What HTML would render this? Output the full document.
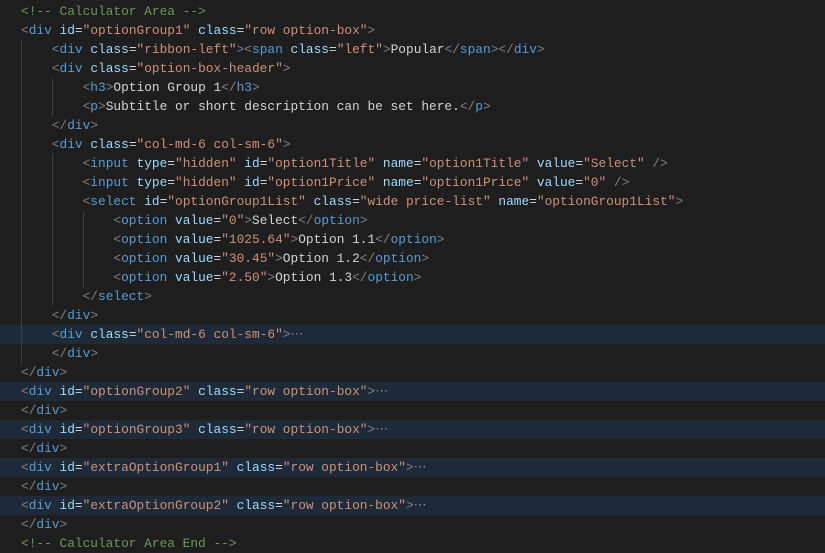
<!DOCTYPE html>
<html><head><meta charset="utf-8"><style>
html,body{margin:0;padding:0;background:#1e1e1e;width:825px;height:552px;overflow:hidden}
#c{position:absolute;left:21px;top:1.5px;font-family:"Liberation Mono",monospace;font-size:12.83px;line-height:19px;color:#d4d4d4;white-space:pre}
.l{height:19px}
.b{color:#808080}.t{color:#569cd6}.a{color:#9cdcfe}.s{color:#ce9178}.c{color:#6a9955}.e{color:#8b8b8b}
.hl{position:absolute;left:0;width:825px;height:19px;background:#1f2a38}
.g{position:absolute;width:1px;background:#404040}
</style></head><body>
<div class="hl" style="top:324.5px"></div>
<div class="hl" style="top:381.5px"></div>
<div class="hl" style="top:419.5px"></div>
<div class="hl" style="top:457.5px"></div>
<div class="hl" style="top:495.5px"></div>
<div class="g" style="left:21px;top:39.5px;height:323px"></div>
<div class="g" style="left:52px;top:77.5px;height:38px"></div>
<div class="g" style="left:52px;top:153.5px;height:152px"></div>
<div class="g" style="left:83px;top:210.5px;height:76px"></div>
<div id="c"><div class="l c">&lt;!-- Calculator Area --&gt;</div><div class="l"><span class="b">&lt;</span><span class="t">div</span> <span class="a">id</span>=<span class="s">"optionGroup1"</span> <span class="a">class</span>=<span class="s">"row option-box"</span><span class="b">&gt;</span></div><div class="l">    <span class="b">&lt;</span><span class="t">div</span> <span class="a">class</span>=<span class="s">"ribbon-left"</span><span class="b">&gt;&lt;</span><span class="t">span</span> <span class="a">class</span>=<span class="s">"left"</span><span class="b">&gt;</span>Popular<span class="b">&lt;/</span><span class="t">span</span><span class="b">&gt;&lt;/</span><span class="t">div</span><span class="b">&gt;</span></div><div class="l">    <span class="b">&lt;</span><span class="t">div</span> <span class="a">class</span>=<span class="s">"option-box-header"</span><span class="b">&gt;</span></div><div class="l">        <span class="b">&lt;</span><span class="t">h3</span><span class="b">&gt;</span>Option Group 1<span class="b">&lt;/</span><span class="t">h3</span><span class="b">&gt;</span></div><div class="l">        <span class="b">&lt;</span><span class="t">p</span><span class="b">&gt;</span>Subtitle or short description can be set here.<span class="b">&lt;/</span><span class="t">p</span><span class="b">&gt;</span></div><div class="l">    <span class="b">&lt;/</span><span class="t">div</span><span class="b">&gt;</span></div><div class="l">    <span class="b">&lt;</span><span class="t">div</span> <span class="a">class</span>=<span class="s">"col-md-6 col-sm-6"</span><span class="b">&gt;</span></div><div class="l">        <span class="b">&lt;</span><span class="t">input</span> <span class="a">type</span>=<span class="s">"hidden"</span> <span class="a">id</span>=<span class="s">"option1Title"</span> <span class="a">name</span>=<span class="s">"option1Title"</span> <span class="a">value</span>=<span class="s">"Select"</span> <span class="b">/&gt;</span></div><div class="l">        <span class="b">&lt;</span><span class="t">input</span> <span class="a">type</span>=<span class="s">"hidden"</span> <span class="a">id</span>=<span class="s">"option1Price"</span> <span class="a">name</span>=<span class="s">"option1Price"</span> <span class="a">value</span>=<span class="s">"0"</span> <span class="b">/&gt;</span></div><div class="l">        <span class="b">&lt;</span><span class="t">select</span> <span class="a">id</span>=<span class="s">"optionGroup1List"</span> <span class="a">class</span>=<span class="s">"wide price-list"</span> <span class="a">name</span>=<span class="s">"optionGroup1List"</span><span class="b">&gt;</span></div><div class="l">            <span class="b">&lt;</span><span class="t">option</span> <span class="a">value</span>=<span class="s">"0"</span><span class="b">&gt;</span>Select<span class="b">&lt;/</span><span class="t">option</span><span class="b">&gt;</span></div><div class="l">            <span class="b">&lt;</span><span class="t">option</span> <span class="a">value</span>=<span class="s">"1025.64"</span><span class="b">&gt;</span>Option 1.1<span class="b">&lt;/</span><span class="t">option</span><span class="b">&gt;</span></div><div class="l">            <span class="b">&lt;</span><span class="t">option</span> <span class="a">value</span>=<span class="s">"30.45"</span><span class="b">&gt;</span>Option 1.2<span class="b">&lt;/</span><span class="t">option</span><span class="b">&gt;</span></div><div class="l">            <span class="b">&lt;</span><span class="t">option</span> <span class="a">value</span>=<span class="s">"2.50"</span><span class="b">&gt;</span>Option 1.3<span class="b">&lt;/</span><span class="t">option</span><span class="b">&gt;</span></div><div class="l">        <span class="b">&lt;/</span><span class="t">select</span><span class="b">&gt;</span></div><div class="l">    <span class="b">&lt;/</span><span class="t">div</span><span class="b">&gt;</span></div><div class="l">    <span class="b">&lt;</span><span class="t">div</span> <span class="a">class</span>=<span class="s">"col-md-6 col-sm-6"</span><span class="b">&gt;</span><span class="e">⋯</span></div><div class="l">    <span class="b">&lt;/</span><span class="t">div</span><span class="b">&gt;</span></div><div class="l"><span class="b">&lt;/</span><span class="t">div</span><span class="b">&gt;</span></div><div class="l"><span class="b">&lt;</span><span class="t">div</span> <span class="a">id</span>=<span class="s">"optionGroup2"</span> <span class="a">class</span>=<span class="s">"row option-box"</span><span class="b">&gt;</span><span class="e">⋯</span></div><div class="l"><span class="b">&lt;/</span><span class="t">div</span><span class="b">&gt;</span></div><div class="l"><span class="b">&lt;</span><span class="t">div</span> <span class="a">id</span>=<span class="s">"optionGroup3"</span> <span class="a">class</span>=<span class="s">"row option-box"</span><span class="b">&gt;</span><span class="e">⋯</span></div><div class="l"><span class="b">&lt;/</span><span class="t">div</span><span class="b">&gt;</span></div><div class="l"><span class="b">&lt;</span><span class="t">div</span> <span class="a">id</span>=<span class="s">"extraOptionGroup1"</span> <span class="a">class</span>=<span class="s">"row option-box"</span><span class="b">&gt;</span><span class="e">⋯</span></div><div class="l"><span class="b">&lt;/</span><span class="t">div</span><span class="b">&gt;</span></div><div class="l"><span class="b">&lt;</span><span class="t">div</span> <span class="a">id</span>=<span class="s">"extraOptionGroup2"</span> <span class="a">class</span>=<span class="s">"row option-box"</span><span class="b">&gt;</span><span class="e">⋯</span></div><div class="l"><span class="b">&lt;/</span><span class="t">div</span><span class="b">&gt;</span></div><div class="l c">&lt;!-- Calculator Area End --&gt;</div></div>
</body></html>
